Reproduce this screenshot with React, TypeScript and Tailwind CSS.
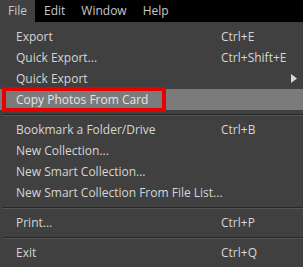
import React from 'react';

type Item =
  | { kind: 'item'; label: string; shortcut?: string; submenu?: boolean; active?: boolean }
  | { kind: 'sep' };

const items: Item[] = [
  { kind: 'item', label: 'Export', shortcut: 'Ctrl+E' },
  { kind: 'item', label: 'Quick Export...', shortcut: 'Ctrl+Shift+E' },
  { kind: 'item', label: 'Quick Export', submenu: true },
  { kind: 'item', label: 'Copy Photos From Card', active: true },
  { kind: 'sep' },
  { kind: 'item', label: 'Bookmark a Folder/Drive', shortcut: 'Ctrl+B' },
  { kind: 'item', label: 'New Collection...' },
  { kind: 'item', label: 'New Smart Collection...' },
  { kind: 'item', label: 'New Smart Collection From File List...' },
  { kind: 'sep' },
  { kind: 'item', label: 'Print...', shortcut: 'Ctrl+P' },
  { kind: 'sep' },
  { kind: 'item', label: 'Exit', shortcut: 'Ctrl+Q' },
];

export default function App() {
  return (
    <div className="relative w-[303px] h-[267px] overflow-hidden bg-[#404040] text-[12px] text-[#d6d6d6]" style={{ fontFamily: '"Open Sans", sans-serif' }}>
      {/* menu bar */}
      <div className="flex h-[22px] items-center bg-black text-[#c8c8c8]">
        <div className="flex h-full items-center bg-[#404040] px-2">File</div>
        <div className="px-2 ml-[1px]">Edit</div>
        <div className="px-2">Window</div>
        <div className="px-2">Help</div>
      </div>

      {/* dropdown */}
      <div className="pt-[4px]">
        {items.map((it, i) =>
          it.kind === 'sep' ? (
            <div key={i} className="flex h-[9px] flex-col justify-center pl-[3px]">
              <div className="h-px bg-[#272727]" />
              <div className="h-px bg-[#555555]" />
            </div>
          ) : (
            <div
              key={i}
              className={'flex h-[21px] items-center pl-4 pr-[6px] leading-none ' + (it.active ? 'bg-[#7b7b7b] text-[#e4e4e4]' : '')}
            >
              <span className="flex-1">{it.label}</span>
              {it.shortcut && <span className="w-[76px]">{it.shortcut}</span>}
              {it.submenu && (
                <svg width="6" height="9" viewBox="0 0 6 9">
                  <path d="M0 0 L6 4.5 L0 9 Z" fill="#d6d6d6" />
                </svg>
              )}
            </div>
          )
        )}
      </div>

      {/* red annotation box */}
      <div className="absolute left-[2px] top-[87px] h-[25px] w-[164px] border-4 border-[#e60000]" />
    </div>
  );
}
